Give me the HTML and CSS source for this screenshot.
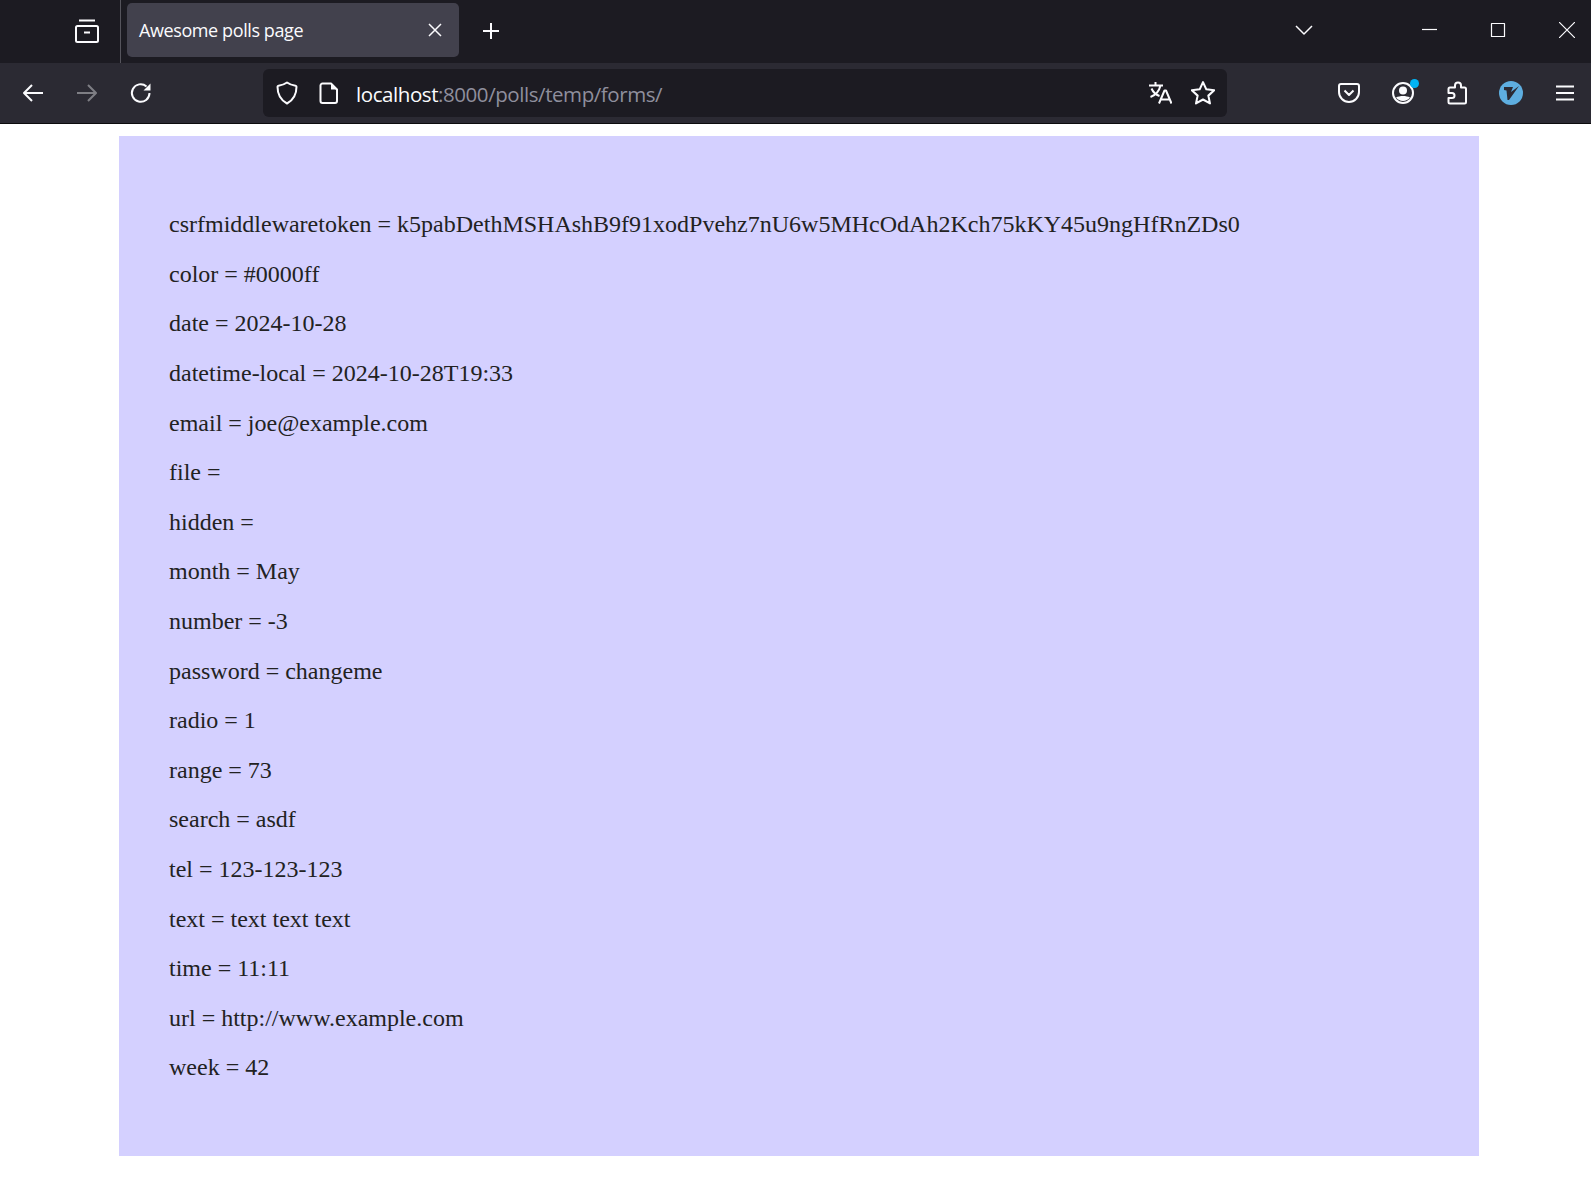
FILE: index.html
```html
<!DOCTYPE html>
<html lang="en">
<head>
  <meta charset="UTF-8" />
  <title>Awesome polls page</title>
  <link rel="stylesheet" href="styles.css">
</head>
<body>
  <!-- Browser tabs -->
  <div class="tabbar">
    <div class="tab-left">
      <svg class="icon" viewBox="0 0 24 24"><path d="M4 1.500h16M2.500 7h19a1.500 1.500 0 0 1 1.500 1.500v13a1.500 1.500 0 0 1-1.500 1.500h-19A1.500 1.500 0 0 1 1 21.500v-13A1.500 1.500 0 0 1 2.500 7zM9 13.500h6"/></svg>
    </div>
    <div class="tab">
      <span class="tab-title">Awesome polls page</span>
      <svg class="tab-close" viewBox="0 0 14 14"><path d="M1 1l12 12M13 1L1 13"/></svg>
    </div>
    <svg class="new-tab" viewBox="0 0 18 18"><path d="M9 1v16M1 9h16"/></svg>
    <div class="tab-space"></div>
    <svg class="tab-list" viewBox="0 0 18 10"><path d="M1 1l8 8 8-8"/></svg>
    <div class="win-btns">
      <svg class="win-btn" viewBox="0 0 16 16"><path d="M1 7.500h15"/></svg>
      <svg class="win-btn" viewBox="0 0 16 16"><path d="M1.500 1.500h13v13h-13z"/></svg>
      <svg class="win-btn" viewBox="0 0 16 16"><path d="M0 0l16 16M16 0L0 16"/></svg>
    </div>
  </div>

  <!-- Nav toolbar -->
  <div class="navbar">
    <div class="nav-btns">
      <svg class="icon" viewBox="0 0 24 24"><path d="M22 12H3M11 4l-8 8 8 8"/></svg>
      <svg class="icon dim" viewBox="0 0 24 24"><path d="M2 12h19M13 4l8 8-8 8"/></svg>
      <svg class="icon" viewBox="0 0 24 24"><path d="M20.500 12a8.800 8.800 0 1 1-3-6.600"/><path class="fill" d="M21.500 2.500v7h-7z"/></svg>
    </div>
    <div class="urlbar">
      <svg class="icon" viewBox="0 0 24 24"><path d="M12 1.500c2.500 1.800 5.500 2.800 8.500 3.200.6.100 1 .5 1 1.100 0 7.700-3 13.200-9.500 16.700C5.500 19 2.500 13.500 2.500 5.800c0-.6.400-1 1-1.100 3-.4 6-1.400 8.500-3.200z"/></svg>
      <svg class="icon" viewBox="0 0 24 24"><path d="M5.500 2.500h8.500l6 6v11.500a2 2 0 0 1-2 2H5.500a2 2 0 0 1-2-2V4.500a2 2 0 0 1 2-2z"/><path class="fill" d="M14 2.500l6 6h-6z"/></svg>
      <div class="url"><span class="host">localhost</span>:8000/polls/temp/forms/</div>
      <svg class="icon translate" viewBox="0 0 24 24"><path d="M1 4.500h14M7.500 1v3.500M12.500 4.500c-1.200 5-4.500 9.500-10 11.500M3.500 7.500c1.500 3.500 4 6 8 7.500M11 22.500l5.500-13h1.500l5.500 13M12.500 18.500h9.500"/></svg>
      <svg class="icon star" viewBox="1.500 1.500 21 21"><path d="M12 2.500l2.900 6.300 6.900.8-5.100 4.700 1.400 6.800-6.100-3.400-6.100 3.400 1.400-6.800-5.100-4.700 6.900-.8z"/></svg>
    </div>
    <div class="nav-space"></div>
    <div class="tools">
      <svg class="icon" viewBox="0 0 24 24"><path d="M4 3h16a2 2 0 0 1 2 2v6a10 10 0 0 1-20 0V5a2 2 0 0 1 2-2zM7.500 9.500l4.500 4.500 4.500-4.500"/></svg>
      <div class="tool-wrap">
        <svg class="icon" viewBox="0 0 24 24"><circle cx="12" cy="12" r="10"/><circle class="fill" cx="12" cy="9.500" r="4"/><path class="fill" d="M5 16.500c4-2 10-2 14 0-3 4.500-11 4.500-14 0z"/></svg>
        <span class="dot"></span>
      </div>
      <svg class="icon" viewBox="0 0 24 24"><path d="M10 5.500V4.500a3 3 0 0 1 6 0v2h3.500A1.500 1.500 0 0 1 21 8v13a1.500 1.500 0 0 1-1.500 1.500H5a1.500 1.500 0 0 1-1.500-1.500v-4H7a2.500 2.500 0 0 0 0-5H3.500V8A1.500 1.500 0 0 1 5 6.500h5z"/></svg>
      <svg class="vim" viewBox="0 0 24 24"><circle cx="12" cy="12" r="12"/><path d="M5 6h9l-2 5 8-6-10 14H8.500L7.500 9.500 5 9z"/></svg>
      <svg class="icon" viewBox="0 0 24 24"><path d="M3 5.500h18M3 12h18M3 18.500h18"/></svg>
    </div>
  </div>

  <!-- Page content -->
  <div class="content">
    <p>csrfmiddlewaretoken = k5pabDethMSHAshB9f91xodPvehz7nU6w5MHcOdAh2Kch75kKY45u9ngHfRnZDs0</p>
    <p>color = #0000ff</p>
    <p>date = 2024-10-28</p>
    <p>datetime-local = 2024-10-28T19:33</p>
    <p>email = joe@example.com</p>
    <p>file =</p>
    <p>hidden =</p>
    <p>month = May</p>
    <p>number = -3</p>
    <p>password = changeme</p>
    <p>radio = 1</p>
    <p>range = 73</p>
    <p>search = asdf</p>
    <p>tel = 123-123-123</p>
    <p>text = text text text</p>
    <p>time = 11:11</p>
    <p>url = http://www.example.com</p>
    <p>week = 42</p>
  </div>
</body>
</html>
```

FILE: styles.css
```css
* { box-sizing: border-box; margin: 0; padding: 0; }
html, body {
  height: 100%;
  overflow: hidden;
  background: #fff;
}
svg { display: block; flex: none; }
svg path, svg circle {
  fill: none;
  stroke: #fbfbfe;
  stroke-width: 2;
  stroke-linejoin: round;
}
svg .fill { fill: #fbfbfe; stroke: none; }

.icon { width: 24px; height: 24px; }
.icon.dim { opacity: 0.4; }
.star path { stroke-width: 1.800; }
.translate { margin-right: 1px; margin-left: -1px; }

/* Tabs */
.tabbar {
  height: 63px;
  background: #1c1b22;
  display: flex;
  align-items: center;
  font-family: "Segoe UI", "Open Sans", "Noto Sans", sans-serif;
}
.tab-left {
  width: 121px;
  height: 63px;
  display: flex;
  align-items: center;
  padding: 0 0 1px 75px;
  border-right: 1px solid #55545c;
}
.tab {
  width: 332px;
  height: 54px;
  margin: 0 0 3px 6px;
  padding: 0 17px 0 12px;
  background: #42414d;
  border-radius: 5px;
  display: flex;
  align-items: center;
  justify-content: space-between;
  color: #fbfbfe;
  font-size: 18px;
  letter-spacing: -0.4px;
}
.tab-close { width: 14px; height: 14px; }
.tab-close path { stroke-width: 1.500; }
.new-tab { width: 18px; height: 18px; margin: 0 0 1px 23px; }
.tab-space { flex: 1; }
.tab-list { width: 18px; height: 10px; margin: 0 108px 3px 0; }
.tab-list path { stroke-width: 1.500; }
.win-btns {
  display: flex;
  gap: 53px;
  padding-right: 16px;
  margin-bottom: 3px;
}
.win-btn { width: 16px; height: 16px; }
.win-btn path { stroke-width: 1.200; }

/* Toolbar */
.navbar {
  height: 61px;
  background: #2b2a33;
  border-bottom: 1px solid #0c0c0d;
  display: flex;
  align-items: center;
}
.nav-btns {
  display: flex;
  gap: 30px;
  padding-left: 21px;
  width: 263px;
}
.urlbar {
  width: 964px;
  height: 48px;
  background: #1c1b22;
  border-radius: 6px;
  display: flex;
  align-items: center;
  gap: 18px;
  padding: 0 12px;
}
.url {
  flex: 1;
  margin-left: -3px;
  padding-top: 2px;
  color: #8f8f9d;
  font-family: "Segoe UI", "Open Sans", "Noto Sans", sans-serif;
  font-size: 20.5px;
  letter-spacing: -0.43px;
  white-space: nowrap;
}
.host { color: #fbfbfe; }
.nav-space { flex: 1; }
.tools {
  display: flex;
  align-items: center;
  gap: 30px;
  padding-right: 14px;
}
.tool-wrap { position: relative; }
.dot {
  position: absolute;
  top: -2px;
  right: -4px;
  width: 9px;
  height: 9px;
  border-radius: 50%;
  background: #00b3f4;
}
.vim { width: 24px; height: 24px; }
.vim circle { fill: #5eaee0; stroke: none; }
.vim path { fill: #2b2a33; stroke: none; }

/* Page */
.content {
  width: 1360px;
  height: 1020px;
  margin: 12px 0 0 119px;
  padding: 75.3px 50px 0;
  background: #d4d0ff;
  color: #222;
  font-family: "Liberation Serif", "Times New Roman", serif;
  font-size: 24px;
}
.content p { margin: 0 0 22.6px; }
```
